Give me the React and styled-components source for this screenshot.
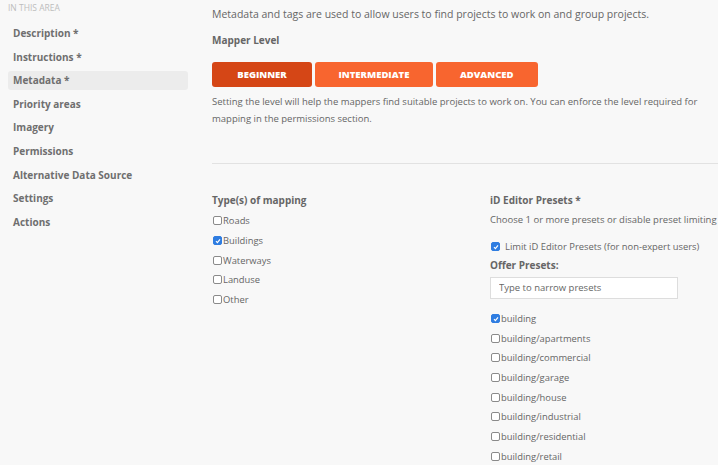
import React from 'react';
import styled, { createGlobalStyle } from 'styled-components';

const sections = [
  'Description *',
  'Instructions *',
  'Metadata *',
  'Priority areas',
  'Imagery',
  'Permissions',
  'Alternative Data Source',
  'Settings',
  'Actions',
];

const levels = ['Beginner', 'Intermediate', 'Advanced'];

const mappingTypes = [
  { name: 'Roads', checked: false },
  { name: 'Buildings', checked: true },
  { name: 'Waterways', checked: false },
  { name: 'Landuse', checked: false },
  { name: 'Other', checked: false },
];

const presets = [
  { name: 'building', checked: true },
  { name: 'building/apartments', checked: false },
  { name: 'building/commercial', checked: false },
  { name: 'building/garage', checked: false },
  { name: 'building/house', checked: false },
  { name: 'building/industrial', checked: false },
  { name: 'building/residential', checked: false },
  { name: 'building/retail', checked: false },
];

const Check = ({ checked }) => (
  <Box $checked={checked}>
    {checked && (
      <svg width="6" height="6" viewBox="0 0 6 6">
        <path d="M1 3.2 L2.4 4.6 L5 1.4" fill="none" stroke="#fff" strokeWidth="1.2" />
      </svg>
    )}
  </Box>
);

const App = () => {
  return (
    <>
      <GlobalStyle />
      <Page>
        <Sidebar>
          <AreaLabel>In this area</AreaLabel>
          <NavList>
            {sections.map((s) => (
              <NavItem key={s} $active={s === 'Metadata *'}>
                {s}
              </NavItem>
            ))}
          </NavList>
        </Sidebar>

        <Main>
          <Intro>
            Metadata and tags are used to allow users to find projects to work on and group projects.
          </Intro>
          <Heading>Mapper Level</Heading>
          <LevelRow>
            {levels.map((l) => (
              <LevelButton key={l} $active={l === 'Beginner'}>
                {l}
              </LevelButton>
            ))}
          </LevelRow>
          <Help>
            Setting the level will help the mappers find suitable projects to work on. You can enforce the level
            required for mapping in the permissions section.
          </Help>

          <Divider />

          <Columns>
            <Column>
              <Heading>Type(s) of mapping</Heading>
              <CheckList>
                {mappingTypes.map((t) => (
                  <CheckRow key={t.name}>
                    <Check checked={t.checked} />
                    {t.name}
                  </CheckRow>
                ))}
              </CheckList>
            </Column>

            <Column>
              <Heading>iD Editor Presets *</Heading>
              <Note>Choose 1 or more presets or disable preset limiting</Note>
              <LimitRow>
                <Check checked />
                Limit iD Editor Presets (for non-expert users)
              </LimitRow>
              <Heading>Offer Presets:</Heading>
              <Search placeholder="Type to narrow presets" />
              <CheckList>
                {presets.map((p) => (
                  <CheckRow key={p.name}>
                    <Check checked={p.checked} />
                    {p.name}
                  </CheckRow>
                ))}
              </CheckList>
            </Column>
          </Columns>
        </Main>
      </Page>
    </>
  );
};

const GlobalStyle = createGlobalStyle`
  html, body {
    margin: 0;
    padding: 0;
    background: #f8f8f8;
    font-family: "Open Sans", "Liberation Sans", sans-serif;
    color: #666;
  }
`;

const Page = styled.div`
  display: flex;
  height: 465px;
  overflow: hidden;
`;

const Sidebar = styled.div`
  width: 180px;
  padding: 0 0 0 8px;
  flex-shrink: 0;
`;

const AreaLabel = styled.div`
  font-size: 8.5px;
  text-transform: uppercase;
  color: #bdbdbd;
  line-height: 14px;
  margin-top: 1px;
`;

const NavList = styled.div`
  display: flex;
  flex-direction: column;
  margin-top: 9px;
`;

const NavItem = styled.div`
  font-size: 10px;
  font-weight: 700;
  color: #6f6f6f;
  height: 19px;
  line-height: 19px;
  margin-bottom: 4.6px;
  padding-left: 5px;
  border-radius: 3px;
  background: ${(p) => (p.$active ? '#ececec' : 'transparent')};
`;

const Main = styled.div`
  flex: 1;
  padding-left: 24px;
  padding-top: 6px;
`;

const Intro = styled.p`
  font-size: 10.5px;
  line-height: 17px;
  margin: 0 0 9px;
`;

const Heading = styled.div`
  font-size: 10px;
  font-weight: 700;
  color: #666;
  line-height: 17px;
`;

const LevelRow = styled.div`
  display: flex;
  gap: 2.5px;
  margin-top: 13px;
`;

const LevelButton = styled.button`
  border: none;
  border-radius: 3px;
  height: 25px;
  padding: 0 24px;
  font-family: inherit;
  font-size: 9.5px;
  font-weight: 800;
  text-transform: uppercase;
  color: #fff;
  background: ${(p) => (p.$active ? '#d54616' : '#f8652f')};
  min-width: 100px;
`;

const Help = styled.p`
  font-size: 9.5px;
  line-height: 17px;
  margin: 6px 0 0;
  padding-right: 8px;
`;

const Divider = styled.hr`
  border: none;
  border-top: 1px solid #e2e2e2;
  margin: 36px 0 28px;
`;

const Columns = styled.div`
  display: grid;
  grid-template-columns: 278px 1fr;
  margin-top: 3px;
`;

const Column = styled.div`
  display: flex;
  flex-direction: column;
`;

const CheckList = styled.div`
  display: flex;
  flex-direction: column;
  margin-top: 2px;
`;

const CheckRow = styled.label`
  display: flex;
  align-items: center;
  font-size: 9.4px;
  height: 19.7px;
  color: #666;
`;

const Box = styled.span`
  width: 7px;
  height: 7px;
  border-radius: 2px;
  border: 1px solid ${(p) => (p.$checked ? '#2f7de1' : '#8a8a8a')};
  background: ${(p) => (p.$checked ? '#2f7de1' : '#fff')};
  display: inline-flex;
  align-items: center;
  justify-content: center;
  margin-right: 1px;
  margin-left: 1px;
  flex-shrink: 0;
`;

const Note = styled.div`
  font-size: 9.5px;
  line-height: 17px;
  margin-top: 2px;
`;

const LimitRow = styled(CheckRow)`
  margin-top: 9px;
  gap: 4px;
`;

const Search = styled.input`
  width: 188px;
  height: 22px;
  box-sizing: border-box;
  border: 1px solid #ddd;
  background: #fff;
  padding: 0 8px;
  font-family: inherit;
  font-size: 9.5px;
  color: #666;
  margin: 3px 0 8px;
  outline: none;

  &::placeholder {
    color: #666;
  }
`;

export default App;
